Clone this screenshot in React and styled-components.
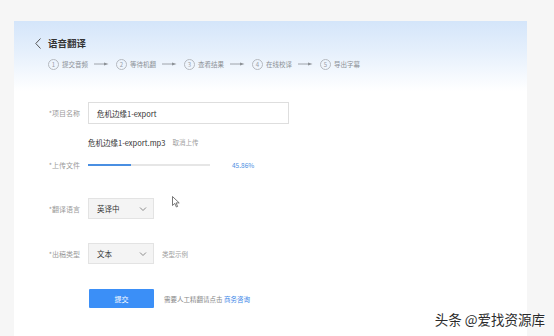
import styled, { createGlobalStyle } from "styled-components";

const GlobalStyle = createGlobalStyle`
  html, body {
    margin: 0;
    padding: 0;
    background: #f6f6f6;
    font-family: "Noto Sans CJK SC", "Noto Sans", sans-serif;
  }
`;

const Page = styled.div`
  position: relative;
  width: 554px;
  height: 336px;
  overflow: hidden;
  padding: 21px 0 0 14px;
  box-sizing: border-box;
`;

const Card = styled.div`
  width: 513px;
  height: 315px;
  background: #fff;
`;

const Header = styled.div`
  height: 70px;
  box-sizing: border-box;
  padding: 14px 0 0 21px;
  background: linear-gradient(180deg, #d4e5fa 0%, #e6f0fc 45%, #ffffff 100%);
`;

const TitleRow = styled.div`
  display: flex;
  align-items: center;
  gap: 7px;
  height: 16px;
`;

const Title = styled.span`
  font-size: 9.5px;
  font-weight: 700;
  color: #333;
`;

const Steps = styled.div`
  display: flex;
  align-items: center;
  margin: 7px 0 0 13px;
  height: 12px;
`;

const Step = styled.div`
  display: flex;
  align-items: center;
  gap: 3px;
`;

const StepNum = styled.span`
  width: 9px;
  height: 9px;
  border: 1px solid #b5b9bf;
  border-radius: 50%;
  font-size: 6px;
  line-height: 9px;
  text-align: center;
  color: #9aa0a6;
`;

const StepText = styled.span`
  font-size: 6.5px;
  color: #8c9196;
  white-space: nowrap;
`;

const StepArrow = styled.svg`
  margin: 0 7px 0 3px;
`;

const Form = styled.div`
  display: flex;
  flex-direction: column;
  padding-top: 11px;
`;

const Row = styled.div`
  display: grid;
  grid-template-columns: 66px auto;
  column-gap: 8px;
  align-items: ${(p) => p.$align || "center"};
  margin-top: ${(p) => p.$top || 0}px;
`;

const Label = styled.span`
  font-size: 7px;
  line-height: 12px;
  color: #9a9a9a;
  text-align: right;
`;

const Field = styled.div`
  display: flex;
  align-items: center;
  gap: ${(p) => p.$gap || 8}px;
`;

const Input = styled.div`
  width: 201px;
  height: 22px;
  box-sizing: border-box;
  border: 1px solid #dedede;
  padding-left: 8px;
  display: flex;
  align-items: center;
  font-size: 7.5px;
  color: #333;
`;

const Upload = styled.div`
  display: flex;
  flex-direction: column;
  gap: 11px;
`;

const FileLine = styled.div`
  display: flex;
  align-items: center;
  gap: 7px;
  height: 12px;
`;

const FileName = styled.span`
  font-size: 7.5px;
  color: #333;
`;

const Muted = styled.span`
  font-size: 6.5px;
  color: ${(p) => p.$color || "#a0a0a0"};
`;

const ProgressLine = styled.div`
  display: flex;
  align-items: center;
  gap: 22px;
  height: 12px;
`;

const Track = styled.div`
  width: 122px;
  height: 2px;
  background: #e6e6e6;
`;

const Fill = styled.div`
  height: 100%;
  background: #4a8fe2;
`;

const Percent = styled.span`
  font-size: 6.5px;
  color: #4a8fe2;
`;

const Select = styled.div`
  width: 66px;
  height: 21px;
  box-sizing: border-box;
  background: #f4f4f4;
  border: 1px solid #e3e3e3;
  padding: 0 6px 0 8px;
  display: flex;
  align-items: center;
  justify-content: space-between;
  font-size: 7.5px;
  color: #333;
`;

const SubmitButton = styled.button`
  width: 65px;
  height: 19px;
  border: none;
  border-radius: 1px;
  background: #3b8ff7;
  color: #fff;
  font-family: inherit;
  font-size: 7px;
  padding: 0;
  margin-left: 1px;
`;

const Link = styled.span`
  color: #3b86e8;
`;

const Cursor = styled.svg`
  position: absolute;
  left: 172px;
  top: 196px;
`;

const Watermark = styled.div`
  position: absolute;
  right: 9px;
  bottom: 7px;
  font-size: 13.5px;
  color: #2b2b2b;
  text-shadow: 0 0 2px #fff, 0 0 2px #fff;
  white-space: nowrap;
`;

const Chevron = () => (
  <svg width="8" height="6" viewBox="0 0 8 6">
    <path d="M1 1.5 L4 4.5 L7 1.5" fill="none" stroke="#8a8a8a" strokeWidth="1" />
  </svg>
);

const steps = ["提交音频", "等待机翻", "查看结果", "在线校译", "导出字幕"];

export default function App() {
  const progress = 45.86;
  return (
    <>
      <GlobalStyle />
      <Page>
        <Card>
          <Header>
            <TitleRow>
              <svg width="6" height="11" viewBox="0 0 6 11">
                <path d="M5.5 0.5 L0.8 5.5 L5.5 10.5" fill="none" stroke="#555" strokeWidth="1" />
              </svg>
              <Title>语音翻译</Title>
            </TitleRow>
            <Steps>
              {steps.map((s, i) => (
                <Step key={s}>
                  <StepNum>{i + 1}</StepNum>
                  <StepText>{s}</StepText>
                  {i < steps.length - 1 && (
                    <StepArrow width="15" height="4" viewBox="0 0 15 4">
                      <path d="M0 2 H11" stroke="#8c9196" strokeWidth="0.8" />
                      <path d="M10 0.6 L14.5 2 L10 3.4 Z" fill="#8c9196" />
                    </StepArrow>
                  )}
                </Step>
              ))}
            </Steps>
          </Header>
          <Form>
            <Row>
              <Label>*项目名称</Label>
              <Input>危机边缘1-export</Input>
            </Row>
            <Row $top={12} $align="end">
              <Label>*上传文件</Label>
              <Upload>
                <FileLine>
                  <FileName>危机边缘1-export.mp3</FileName>
                  <Muted>取消上传</Muted>
                </FileLine>
                <ProgressLine>
                  <Track>
                    <Fill style={{ width: `${(progress / 100) * 122 * 0.76}px` }} />
                  </Track>
                  <Percent>{progress}%</Percent>
                </ProgressLine>
              </Upload>
            </Row>
            <Row $top={27}>
              <Label>*翻译语言</Label>
              <Field>
                <Select>
                  英译中
                  <Chevron />
                </Select>
              </Field>
            </Row>
            <Row $top={24}>
              <Label>*出稿类型</Label>
              <Field>
                <Select>
                  文本
                  <Chevron />
                </Select>
                <Muted>类型示例</Muted>
              </Field>
            </Row>
            <Row $top={25}>
              <span />
              <Field $gap={10}>
                <SubmitButton>提交</SubmitButton>
                <Muted $color="#888">
                  需要人工精翻请点击 <Link>商务咨询</Link>
                </Muted>
              </Field>
            </Row>
          </Form>
        </Card>
        <Cursor width="8" height="12" viewBox="0 0 8 12">
          <path d="M0.5 0.5 L0.5 9.5 L2.8 7.4 L4.4 11 L5.6 10.5 L4.1 6.9 L7.2 6.9 Z" fill="#fff" stroke="#555" strokeWidth="0.8" />
        </Cursor>
        <Watermark>头条 @爱找资源库</Watermark>
      </Page>
    </>
  );
}
